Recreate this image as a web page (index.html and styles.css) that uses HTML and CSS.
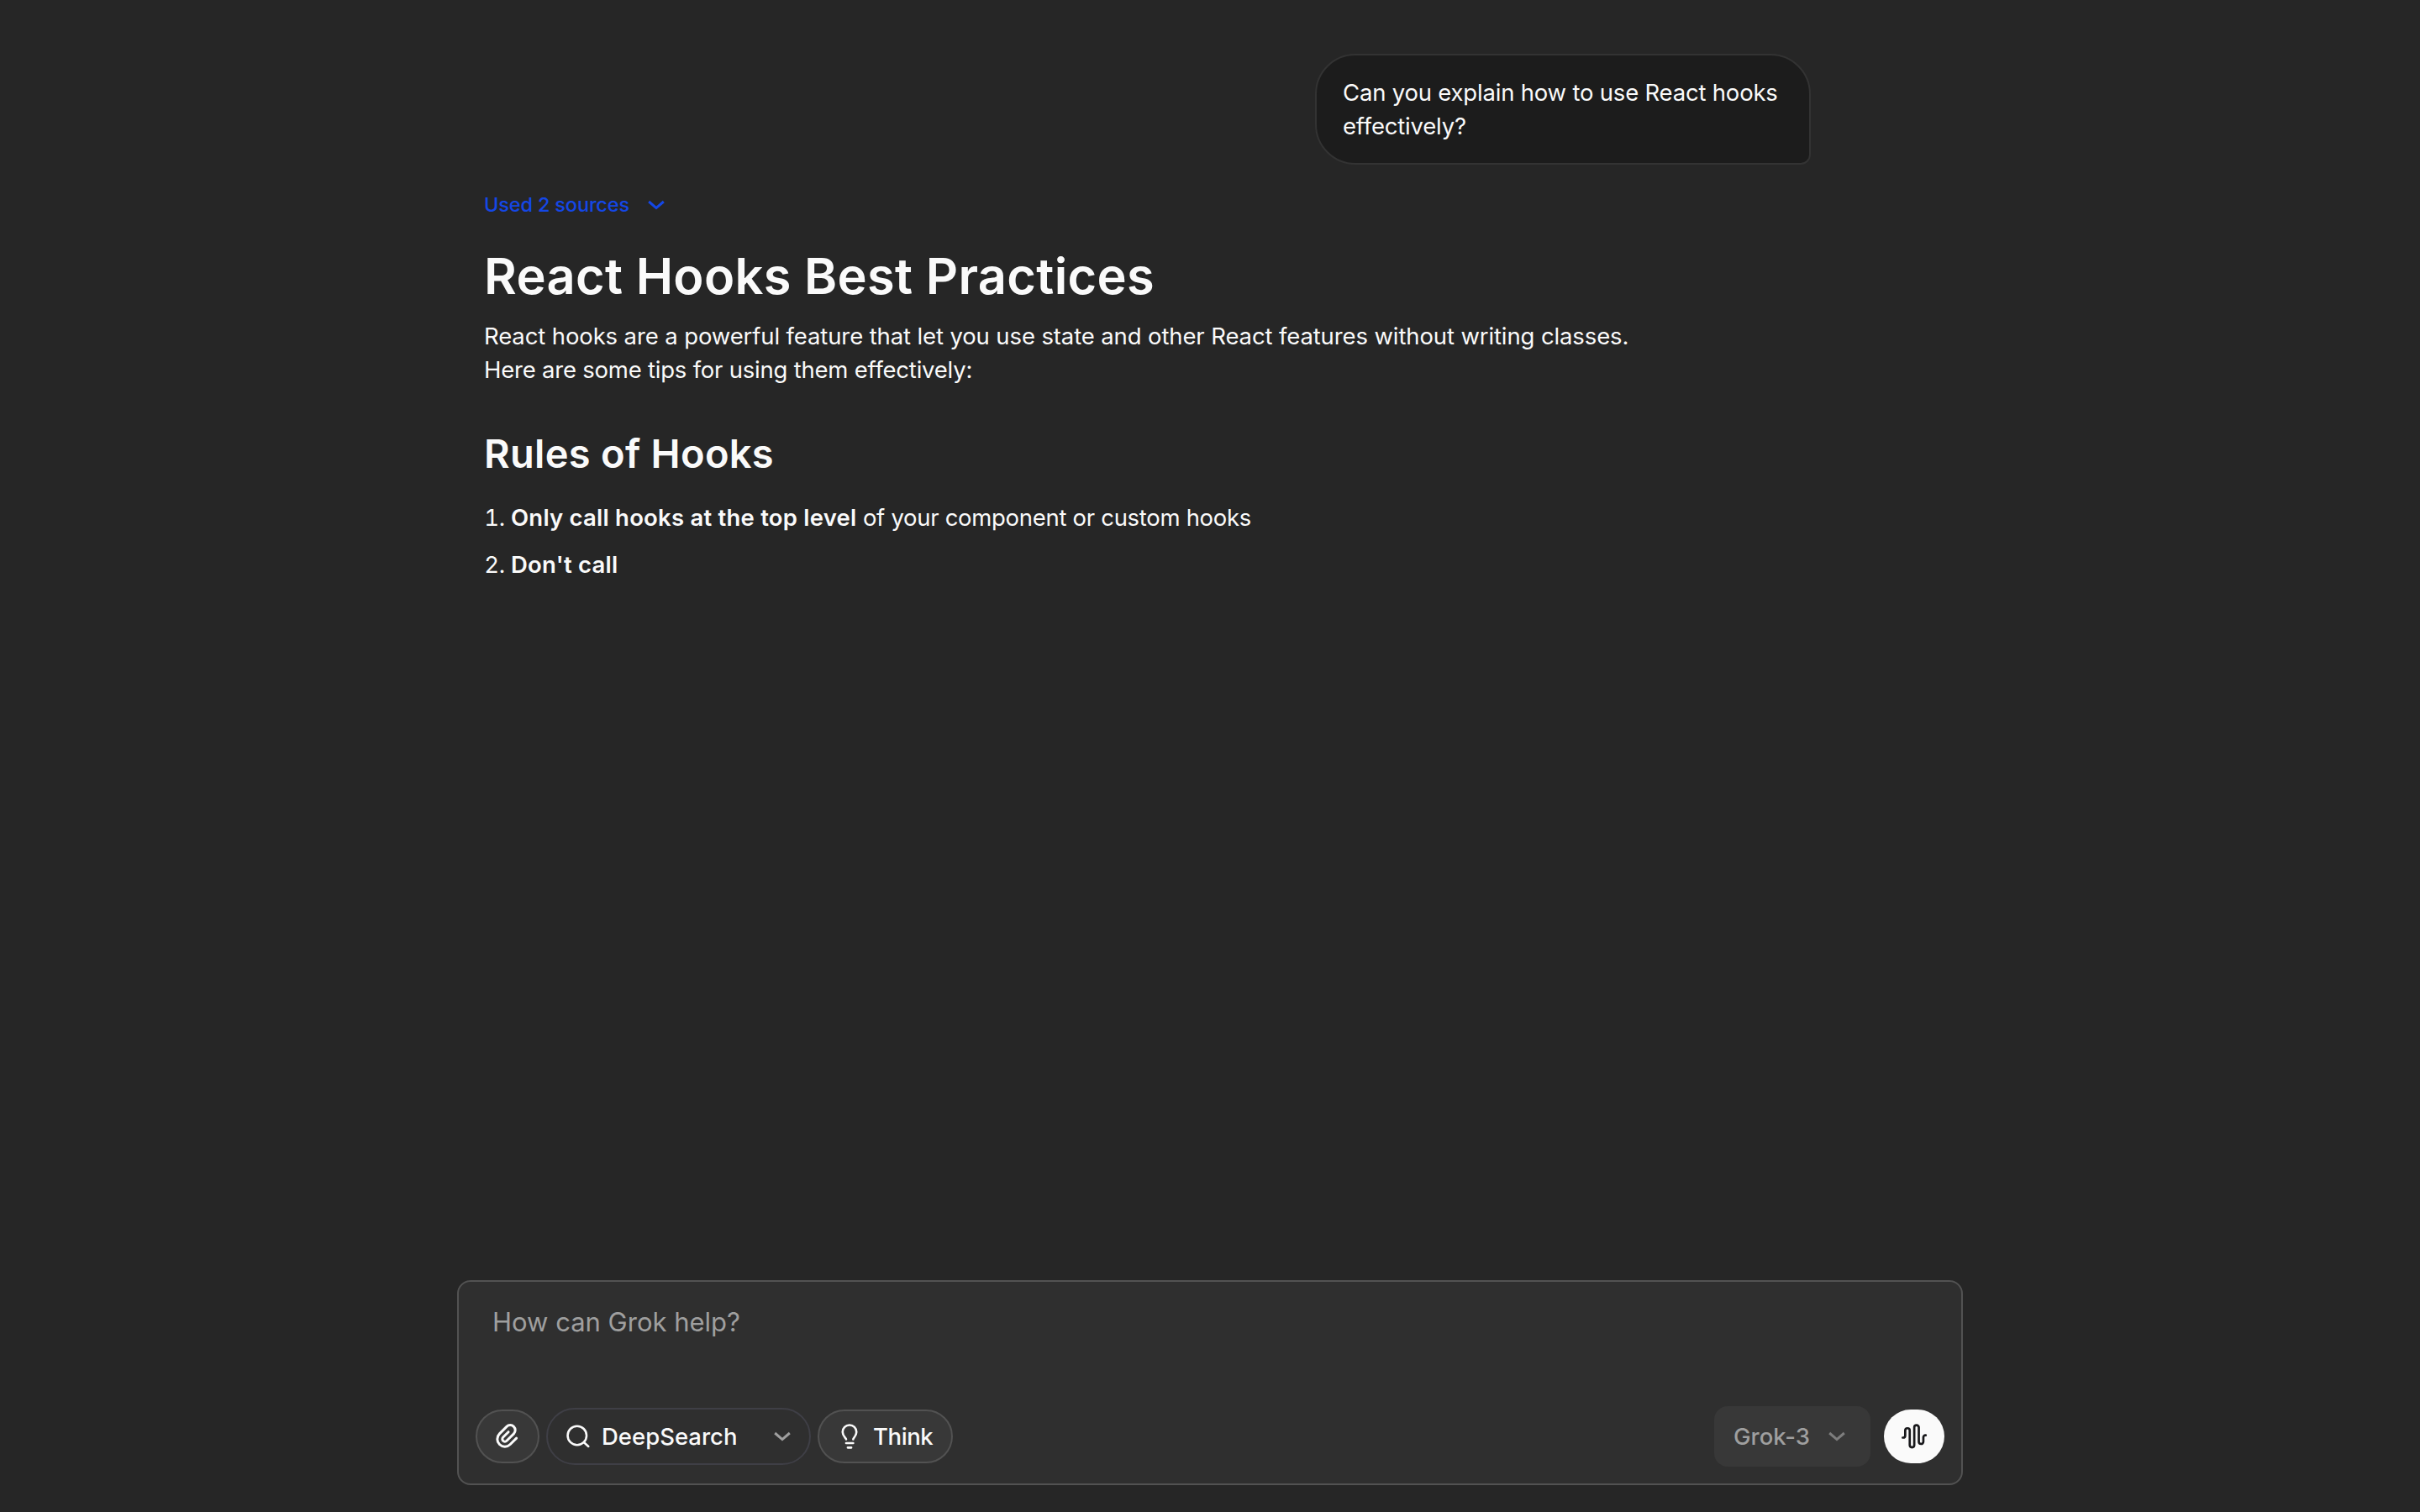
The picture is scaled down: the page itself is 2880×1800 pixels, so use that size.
FILE: index.html
```html
<!DOCTYPE html>
<html lang="en">
<head>
  <meta charset="UTF-8" />
  <meta name="viewport" content="width=device-width, initial-scale=1.0"/>
  <title>Grok Chat</title>
  <link rel="stylesheet" href="styles.css">
</head>
<body>
  <main class="chat">
    <div class="bubble">Can you explain how to use React hooks<br>effectively?</div>

    <article class="answer">
      <a class="sources">Used 2 sources
        <svg class="chevron" viewBox="0 0 20 10"><path d="M1.2 1 10 8.6 18.8 1"/></svg>
      </a>
      <h1>React Hooks Best Practices</h1>
      <p>React hooks are a powerful feature that let you use state and other React features without writing classes.<br><span class="tips">Here are some tips for using them effectively:</span></p>
      <h2>Rules of Hooks</h2>
      <ol>
        <li><strong>Only call hooks at the top level</strong> of your component or custom hooks</li>
        <li><strong>Don't call</strong></li>
      </ol>
    </article>
  </main>

  <form class="composer">
    <div class="placeholder">How can Grok help?</div>
    <div class="toolbar">
      <button type="button" class="btn attach">
        <svg class="icon clip" viewBox="0 0 24 24"><path d="M10 9v6a2 2 0 0 0 4 0V7a4 4 0 0 0-8 0v8a6 6 0 0 0 12 0V8"/></svg>
      </button>
      <button type="button" class="btn search">
        <svg class="icon" viewBox="0 0 24 24"><circle cx="11.2" cy="11.3" r="7.5"/><path d="m16.7 16.8 3.5 3.2"/></svg>
        <span>DeepSearch</span>
        <svg class="chevron" viewBox="0 0 20 10"><path d="M1.2 1 10 8.6 18.8 1"/></svg>
      </button>
      <button type="button" class="btn think">
        <svg class="icon" viewBox="0 0 24 24"><path d="M9.3 14.3c0-.9-2.8-2.6-2.8-5.8a5.5 5.5 0 0 1 11 0c0 3.2-2.6 4.9-2.6 5.8M9.3 17.3h5.6M10.6 20.9h2.8"/></svg>
        <span>Think</span>
      </button>
      <button type="button" class="btn model">
        <span>Grok-3</span>
        <svg class="chevron" viewBox="0 0 20 10"><path d="M1.2 1 10 8.6 18.8 1"/></svg>
      </button>
      <button type="button" class="btn voice">
        <svg class="icon" viewBox="0 0 24 24"><path d="M2.9 13h.3a1.7 1.7 0 0 0 1.7-1.7v-4a1.8 1.8 0 0 1 3.6 0v11.6a1.8 1.8 0 0 0 3.6 0v-14a1.8 1.8 0 0 1 3.6 0v11.3a1.8 1.8 0 0 0 3.6 0v-3.4a1.6 1.6 0 0 1 1.6-1.7h.3"/></svg>
      </button>
    </div>
  </form>
</body>
</html>
```
FILE: styles.css
```css
* {
  box-sizing: border-box;
}

body {
  margin: 0;
  height: 100vh;
  display: flex;
  flex-direction: column;
  align-items: center;
  background-color: #262626;
  color: #fafafa;
  font-family: Inter, sans-serif;
  font-size: 27.5px;
  line-height: 40px;
  overflow: hidden;
}

.chat {
  width: 1728px;
  flex: 1;
  display: flex;
  flex-direction: column;
  padding-top: 64px;
}

.bubble {
  align-self: flex-end;
  width: 590px;
  height: 132px;
  margin-right: 149px;
  padding: 24px 30px 24px 31px;
  white-space: nowrap;
  letter-spacing: -0.2px;
  background-color: #1c1c1c;
  border: 2px solid #333;
  border-radius: 48px 48px 12px 48px;
}

svg {
  display: block;
  fill: none;
  stroke: currentColor;
  stroke-width: 2;
  stroke-linecap: round;
  stroke-linejoin: round;
  flex-shrink: 0;
}

.icon {
  width: 36px;
  height: 36px;
}

.chevron {
  width: 20px;
  height: 10px;
  stroke-width: 3;
  stroke-linecap: butt;
  stroke-linejoin: miter;
  overflow: visible;
}

.sources {
  display: flex;
  align-items: center;
  gap: 22px;
  margin-top: 28px;
  color: #1447e6;
  font-size: 23.5px;
  font-weight: 500;
  letter-spacing: -0.15px;
}

h1, h2, p, ol {
  margin: 0;
  white-space: nowrap;
}

h1 {
  margin-top: 24px;
  font-size: 59.5px;
  font-weight: 600;
  line-height: 80px;
  letter-spacing: 0.33px;
}

p {
  margin-top: 12px;
  letter-spacing: -0.12px;
}

.tips {
  letter-spacing: -0.22px;
}

h2 {
  margin-top: 48px;
  font-size: 47px;
  font-weight: 600;
  line-height: 64px;
  letter-spacing: 0.3px;
}

ol {
  margin-top: 24px;
  padding-left: 32px;
  letter-spacing: -0.3px;
}

li {
  margin-bottom: 16px;
}

strong {
  font-weight: 600;
  letter-spacing: 0.22px;
}

.composer {
  width: 1792px;
  height: 244px;
  margin-bottom: 32px;
  padding: 20px;
  display: flex;
  flex-direction: column;
  justify-content: space-between;
  background-color: #2f2f2f;
  border: 2px solid #525252;
  border-radius: 16px;
}

.placeholder {
  padding: 8px 20px;
  color: #9f9f9f;
  font-size: 31px;
  line-height: 40px;
}

.toolbar {
  display: flex;
  align-items: center;
  height: 72px;
}

.btn {
  display: flex;
  align-items: center;
  height: 64px;
  padding: 0;
  color: #fafafa;
  font: inherit;
  font-weight: 500;
  background-color: #383838;
  border: 2px solid #525252;
  border-radius: 32px;
}

.attach {
  width: 76px;
  justify-content: center;
}

.clip {
  transform: rotate(45deg);
}

.search {
  width: 315px;
  height: 68px;
  margin: 0 8px;
  padding: 0 22px 0 18px;
  background-color: transparent;
  border-color: #3f3f46;
  border-radius: 34px;
}

.search .icon {
  margin-right: 10px;
  stroke-width: 1.7;
}

.search .chevron {
  margin-left: auto;
  color: #9f9f9f;
}

.think {
  width: 161px;
  padding-left: 18px;
  letter-spacing: -0.4px;
}

.think .icon {
  margin-right: 10px;
  stroke-width: 1.75;
}

.model {
  width: 186px;
  height: 72px;
  margin-left: auto;
  margin-right: 16px;
  padding: 0 30px 0 23px;
  justify-content: space-between;
  color: #9f9f9f;
  border: none;
  border-radius: 16px;
}

.model .chevron {
  color: #7d7d7d;
}

.voice {
  width: 72px;
  justify-content: center;
  color: #18181b;
  background-color: #fafafa;
  border: none;
}

.voice .icon {
  stroke-width: 1.8;
}
```
